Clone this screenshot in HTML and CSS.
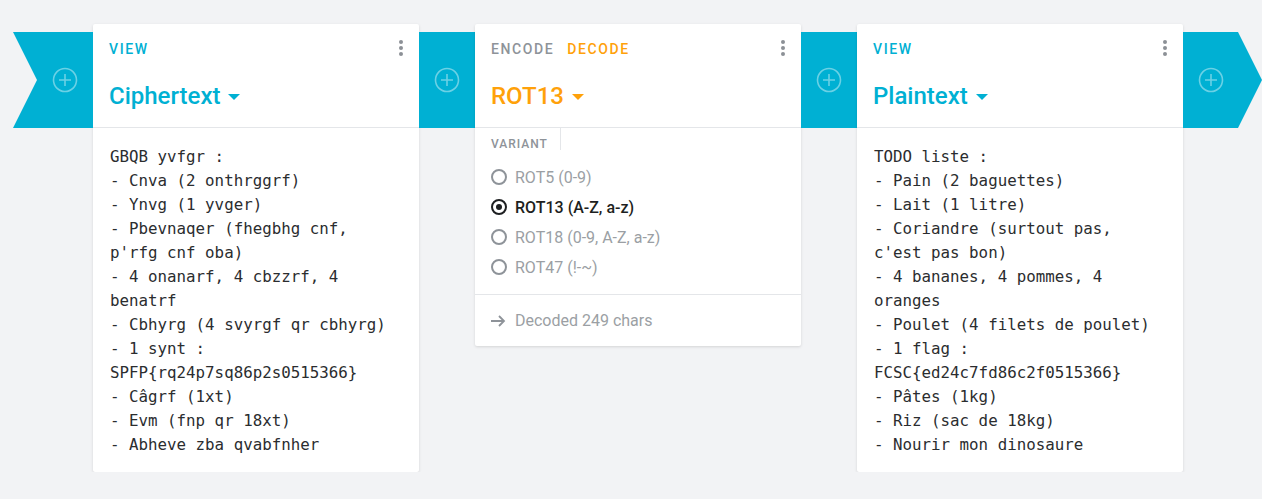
FILE: index.html
```html
<!DOCTYPE html>
<html lang="fr">
<head>
<meta charset="utf-8">
<title>Cryptii</title>
<link rel="stylesheet" href="styles.css">
</head>
<body>
<div class="pipeline">
  <div class="band band-start">
    <svg class="plus" width="26" height="26" viewBox="0 0 26 26"><circle cx="13" cy="13" r="11.5"/><path d="M13 7v12M7 13h12"/></svg>
  </div>

  <section class="card">
    <header class="card-head">
      <div class="head-row">
        <span class="tag tag-view">VIEW</span>
        <span class="dots"><i></i><i></i><i></i></span>
      </div>
      <div class="title title-view">Ciphertext<span class="caret"></span></div>
    </header>
    <div class="text">GBQB yvfgr :
- Cnva (2 onthrggrf)
- Ynvg (1 yvger)
- Pbevnaqer (fhegbhg cnf, p'rfg cnf oba)
- 4 onanarf, 4 cbzzrf, 4 benatrf
- Cbhyrg (4 svyrgf qr cbhyrg)
- 1 synt : SPFP{rq24p7sq86p2s0515366}
- Câgrf (1xt)
- Evm (fnp qr 18xt)
- Abheve zba qvabfnher</div>
  </section>

  <div class="band">
    <svg class="plus" width="26" height="26" viewBox="0 0 26 26"><circle cx="13" cy="13" r="11.5"/><path d="M13 7v12M7 13h12"/></svg>
  </div>

  <section class="card">
    <header class="card-head">
      <div class="head-row">
        <span class="tags"><span class="tag tag-muted">ENCODE</span><span class="tag tag-decode">DECODE</span></span>
        <span class="dots"><i></i><i></i><i></i></span>
      </div>
      <div class="title title-decode">ROT13<span class="caret"></span></div>
    </header>
    <div class="settings">
      <div class="field-label">VARIANT</div>
      <ul class="radios">
        <li class="radio"><span class="ring"></span>ROT5 (0-9)</li>
        <li class="radio radio-on"><span class="ring"></span>ROT13 (A-Z, a-z)</li>
        <li class="radio"><span class="ring"></span>ROT18 (0-9, A-Z, a-z)</li>
        <li class="radio"><span class="ring"></span>ROT47 (!-~)</li>
      </ul>
    </div>
    <footer class="status">
      <svg class="arrow" width="16" height="16" viewBox="0 0 16 16"><path d="M1 8h13M9 3l5 5-5 5"/></svg>
      Decoded 249 chars
    </footer>
  </section>

  <div class="band">
    <svg class="plus" width="26" height="26" viewBox="0 0 26 26"><circle cx="13" cy="13" r="11.5"/><path d="M13 7v12M7 13h12"/></svg>
  </div>

  <section class="card">
    <header class="card-head">
      <div class="head-row">
        <span class="tag tag-view">VIEW</span>
        <span class="dots"><i></i><i></i><i></i></span>
      </div>
      <div class="title title-view">Plaintext<span class="caret"></span></div>
    </header>
    <div class="text">TODO liste :
- Pain (2 baguettes)
- Lait (1 litre)
- Coriandre (surtout pas, c'est pas bon)
- 4 bananes, 4 pommes, 4 oranges
- Poulet (4 filets de poulet)
- 1 flag : FCSC{ed24c7fd86c2f0515366}
- Pâtes (1kg)
- Riz (sac de 18kg)
- Nourir mon dinosaure</div>
  </section>

  <div class="band band-end">
    <svg class="plus" width="26" height="26" viewBox="0 0 26 26"><circle cx="13" cy="13" r="11.5"/><path d="M13 7v12M7 13h12"/></svg>
  </div>
</div>
</body>
</html>
```

FILE: styles.css
```css
* { box-sizing: border-box; }

body {
  margin: 0;
  background: #f2f3f5;
  font-family: Roboto, "Noto Sans", Arial, sans-serif;
  color: #2d2f31;
}

.pipeline {
  display: flex;
  align-items: flex-start;
  padding: 24px 0 0 13px;
}

.band {
  width: 56px;
  height: 96px;
  margin-top: 8px;
  background: #00b0d3;
  display: flex;
  align-items: center;
  justify-content: center;
  flex-shrink: 0;
}

.band-start {
  width: 80px;
  padding-left: 24px;
  clip-path: polygon(0 0, 100% 0, 100% 100%, 0 100%, 24px 50%);
}

.band-end {
  width: 79px;
  padding-right: 23px;
  clip-path: polygon(0 0, 55px 0, 79px 50%, 55px 100%, 0 100%);
}

.plus {
  display: block;
  fill: none;
  stroke: rgba(255, 255, 255, 0.42);
  stroke-width: 1.6;
}

.card {
  width: 326px;
  flex-shrink: 0;
  background: #fff;
  border-radius: 2px;
  box-shadow: 0 1px 3px rgba(0, 0, 0, 0.13);
}

.card-head {
  height: 104px;
  padding: 17px 16px 0 16px;
  border-bottom: 1px solid #e4e6e9;
}

.head-row {
  display: flex;
  justify-content: space-between;
  align-items: center;
  height: 16px;
}

.tags { display: flex; gap: 13px; }

.tag {
  font-size: 14px;
  font-weight: 500;
  letter-spacing: 1.6px;
  line-height: 16px;
}

.tag-view { color: #00b0d3; }
.tag-muted { color: #8e9399; }
.tag-decode { color: #ffa10a; }

.dots {
  display: flex;
  flex-direction: column;
  gap: 2px;
  margin-top: -2px;
}

.dots i {
  display: block;
  width: 4px;
  height: 4px;
  border-radius: 50%;
  background: #8c9096;
}

.title {
  margin-top: 23px;
  font-size: 24px;
  font-weight: 500;
  line-height: 32px;
  display: flex;
  align-items: center;
}

.title-view { color: #00b0d3; }
.title-decode { color: #ffa10a; }

.caret {
  width: 0;
  height: 0;
  margin-left: 8px;
  margin-top: 2px;
  border-left: 6px solid transparent;
  border-right: 6px solid transparent;
  border-top: 6px solid currentColor;
}

.text {
  padding: 17px 16px 15px 17px;
  font-family: "DejaVu Sans Mono", "Liberation Mono", monospace;
  font-size: 15.8px;
  line-height: 24px;
  white-space: pre-wrap;
  color: #2b2d2f;
}

.settings {
  padding-bottom: 12px;
  border-bottom: 1px solid #e4e6e9;
}

.field-label {
  width: 86px;
  height: 22px;
  padding: 9px 0 0 16px;
  border-right: 1px solid #e4e6e9;
  font-size: 12px;
  font-weight: 500;
  letter-spacing: 1px;
  line-height: 14px;
  color: #8e9399;
  white-space: nowrap;
}

.radios {
  list-style: none;
  margin: 12px 0 0;
  padding: 0 16px;
}

.radio {
  display: flex;
  align-items: center;
  height: 30px;
  font-size: 16px;
  color: #9b9fa4;
}

.ring {
  width: 16px;
  height: 16px;
  border: 2px solid #8e9399;
  border-radius: 50%;
  margin-right: 8px;
  display: flex;
  align-items: center;
  justify-content: center;
}

.radio-on {
  color: #1d1f21;
  font-weight: 500;
}

.radio-on .ring { border-color: #1d1f21; }

.radio-on .ring::after {
  content: "";
  width: 6px;
  height: 6px;
  border-radius: 50%;
  background: #1d1f21;
}

.status {
  height: 51px;
  display: flex;
  align-items: center;
  padding: 0 16px 0 15px;
  font-size: 16px;
  color: #9b9fa4;
}

.arrow {
  margin-right: 9px;
  fill: none;
  stroke: #8e9399;
  stroke-width: 1.8;
}
```
